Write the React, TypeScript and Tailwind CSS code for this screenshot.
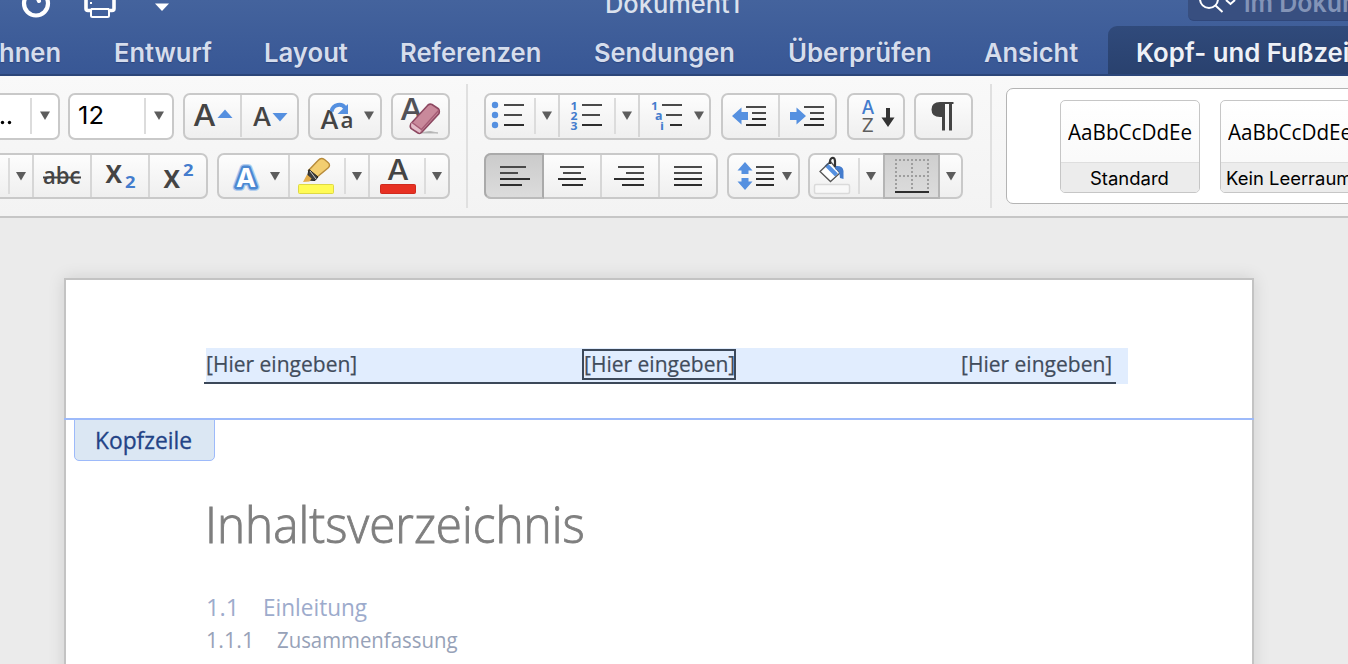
import { useLayoutEffect, useRef, useState, type ReactNode } from "react";
import clsx from "clsx";

/** Text stretched or condensed horizontally to a given advance width. */
function Fit({ width, className, children }: { width: number; className?: string; children: ReactNode }) {
  const ref = useRef<HTMLSpanElement>(null);
  const [scale, setScale] = useState(1);
  useLayoutEffect(() => {
    if (ref.current) setScale(width / ref.current.offsetWidth);
  }, [width]);
  return (
    <span className={clsx("block shrink-0", className)} style={{ width }}>
      <span ref={ref} className="inline-block origin-left whitespace-nowrap" style={{ transform: `scaleX(${scale})` }}>
        {children}
      </span>
    </span>
  );
}

function Group({ className, children }: { className?: string; children: ReactNode }) {
  return (
    <div
      className={clsx(
        "flex shrink-0 rounded-[7px] border-2 border-[#c9c9c9] bg-linear-to-b from-[#fdfdfd] to-[#efefef]",
        className,
      )}
    >
      {children}
    </div>
  );
}

/** One button; the view box uses toolbar coordinates. */
function Cell({ box, className, children }: { box: string; className?: string; children: ReactNode }) {
  return (
    <div className={clsx("shrink-0", className)}>
      <svg viewBox={box} className="block h-[43px] w-full overflow-visible">
        {children}
      </svg>
    </div>
  );
}

const Arrow = ({ x, y }: { x: number; y: number }) => (
  <path d={`M${x - 5} ${y - 4}h10l-5 8.500z`} fill="#5c5c5c" />
);
const Short = ({ x, y }: { x: number; y: number }) => <path d={`M${x} ${y}v36`} stroke="#dcdcdc" strokeWidth="2" />;
const Full = ({ x, y }: { x: number; y: number }) => <path d={`M${x} ${y}v42`} stroke="#d6d6d6" strokeWidth="2" />;

function Letter(p: { x: number; y: number; size: number; w: number; fill?: string; weight?: number; font?: string; children: string }) {
  return (
    <text
      x={p.x}
      y={p.y}
      fontSize={p.size}
      fontWeight={p.weight ?? 550}
      fontFamily={p.font ?? "Inter, sans-serif"}
      fill={p.fill ?? "#444"}
      textLength={p.w}
      lengthAdjust="spacingAndGlyphs"
    >
      {p.children}
    </text>
  );
}

const Lines = ({ rows }: { rows: number[][] }) => (
  <>
    {rows.map(([x1, x2, y], i) => (
      <path key={i} d={`M${x1} ${y}H${x2}`} stroke={i < rows.length / 2 ? "#4a4a4a" : "#2d2d2d"} strokeWidth="2" />
    ))}
  </>
);

const BLUE = "#5590e0";

function TitleBar() {
  return (
    <header className="h-[76px] overflow-hidden border-b-2 border-[#2c4679] bg-linear-to-b from-[#44639d] to-[#385795] font-['Inter',sans-serif] text-[26px] leading-8">
      <div className="flex h-[26px] items-start">
        <svg className="h-[26px] w-[180px] shrink-0" viewBox="0 0 180 26" fill="none" stroke="#fff">
          <circle cx="36" cy="3.5" r="12" strokeWidth="4.2" />
          <path d="M38 -1L39 1" strokeWidth="4" strokeLinecap="round" />
          <path d="M86 -2v10.500q0 2 2 2h3.500M114 -2v10.500q0 2-2 2h-3.500" strokeWidth="3.600" />
          <rect x="91" y="9" width="18" height="8" rx="1.500" strokeWidth="2" />
          <path d="M91 9H109" strokeWidth="2" />
          <rect x="90" y="2" width="2" height="2" fill="#fff" stroke="none" />
          <path d="M155 3.500h14l-7 7.500z" fill="#fff" stroke="none" />
        </svg>
        <Fit width={135} className="-mt-[12px] ml-[425px] font-medium text-[#dbe1ed]">
          Dokument1
        </Fit>
        <div className="ml-[448px] flex h-[21px] w-[160px] shrink-0 items-start overflow-hidden rounded-bl-[6px] border-b border-[#30477a] bg-[#384f80]">
          <svg className="h-[20px] w-[54px] shrink-0" viewBox="1188 0 54 20" fill="none" stroke="#fff" strokeWidth="2">
            <circle cx="1209" cy="-1" r="9" />
            <path d="M1215.500 5.500L1222.500 12M1226 0l4.500 4 4.500-4" />
          </svg>
          <Fit width={121} className="-mt-[13px] ml-[2px] font-semibold text-[#8394b7]">
            im Dokum
          </Fit>
        </div>
      </div>
      <nav className="flex h-12 w-[1360px] font-semibold text-[#d6ddec] [text-shadow:0_1px_1px_rgba(20,35,80,0.35)]">
        <Fit width={62} className="-ml-[1px] pt-[11px]">hnen</Fit>
        <Fit width={98} className="ml-[53px] pt-[11px]">Entwurf</Fit>
        <Fit width={84} className="ml-[52px] pt-[11px]">Layout</Fit>
        <Fit width={141} className="ml-[52px] pt-[11px]">Referenzen</Fit>
        <Fit width={141} className="ml-[53px] pt-[11px]">Sendungen</Fit>
        <Fit width={144} className="ml-[53px] pt-[11px]">Überprüfen</Fit>
        <Fit width={94} className="ml-[52px] pt-[11px]">Ansicht</Fit>
        <div className="ml-[30px] flex w-[260px] shrink-0 rounded-tl-[9px] bg-linear-to-b from-[#304a7b] to-[#29416e] pl-[28px] text-[#eef1f7]">
          <Fit width={214} className="pt-[11px]">Kopf- und Fußzei</Fit>
        </div>
      </nav>
    </header>
  );
}

function FontGroup() {
  return (
    <div className="flex w-[450px] shrink-0 flex-col gap-[13px] pt-[17px]">
      <div className="flex h-[47px]">
        <Group className="-ml-[10px] w-[70px] bg-white bg-none">
          <Cell box="-8 95 66 43" className="w-[66px]">
            <circle cx="2.500" cy="122.500" r="1.700" fill="#000" />
            <circle cx="9.500" cy="122.500" r="1.700" fill="#000" />
            <Short x={31} y={98} />
            <Arrow x={45} y={115.500} />
          </Cell>
        </Group>
        <Group className="ml-[8px] w-[106px] bg-white bg-none">
          <Cell box="70 95 102 43" className="w-[102px]">
            <Letter x={78} y={124} size={24} w={26} fill="#000" weight={400}>12</Letter>
            <Short x={145} y={98} />
            <Arrow x={159} y={115.500} />
          </Cell>
        </Group>
        <Group className="ml-[9px] w-[116px]">
          <Cell box="185 95 56 43" className="w-[56px]">
            <Letter x={193} y={126} size={30} w={23}>A</Letter>
            <path d="M217.500 118l7.500-8.500 7.500 8.500z" fill={BLUE} />
          </Cell>
          <Cell box="241 95 56 43" className="w-[56px]">
            <Full x={241} y={95} />
            <Letter x={252.500} y={125.500} size={25} w={19}>A</Letter>
            <path d="M272.500 113h15l-7.500 8.500z" fill={BLUE} />
          </Cell>
        </Group>
        <Group className="ml-[9px] w-[74px]">
          <Cell box="310 95 70 43" className="w-[70px]">
            <Letter x={320} y={128.500} size={25} w={19}>A</Letter>
            <Letter x={340.500} y={128} size={22} w={13} weight={600} font="Open Sans, sans-serif">a</Letter>
            <path d="M331.500 111.500C333 104 342 103 345 108" fill="none" stroke={BLUE} strokeWidth="4" />
            <path d="M348 104v10H337.500z" fill={BLUE} />
            <Arrow x={369} y={115.500} />
          </Cell>
        </Group>
        <Group className="ml-[9px] w-[59px]">
          <Cell box="393 95 55 43" className="w-[55px]">
            <Letter x={400} y={120} size={30} w={23} fill="#515157">A</Letter>
            <path d="M418 133H438l-8-1.500z" fill="#aaa" stroke="#bbb" />
            <path d="M411 123.500L428 105q2-1.500 4-.5l6 4q2 1.500 1 5L422 132q-2 2-4 1l-7-4.500q-1.500-2-0-5z" fill="#c9899b" stroke="#8d4861" strokeWidth="1.600" />
            <path d="M411.500 122.500L421 129.500l-1 3.500-8-5q-1.500-2-.5-5.500z" fill="#e3bcc8" />
            <path d="M412 122.500l9.500 7L439 110" fill="none" stroke="#a65d76" strokeWidth="1.400" />
          </Cell>
        </Group>
      </div>
      <div className="flex h-[46px]">
        <Group className="-ml-[10px] w-[218px]">
          <Cell box="-8 155 41 43" className="w-[41px]">
            <Short x={9} y={158} />
            <Arrow x={21} y={176} />
          </Cell>
          <Cell box="33 155 58 43" className="w-[58px]">
            <Full x={33} y={155} />
            <Letter x={43} y={184} size={23} w={37.500} weight={600} font="Open Sans, sans-serif">abc</Letter>
            <path d="M43 177.500H81" stroke="#444" strokeWidth="2" />
          </Cell>
          <Cell box="91 155 58 43" className="w-[58px]">
            <Full x={91} y={155} />
            <Letter x={105.500} y={182.500} size={25} w={16.500} weight={700} font="Open Sans, sans-serif">X</Letter>
            <Letter x={125} y={188} size={16} w={10.500} weight={700} font="Open Sans, sans-serif" fill="#447ccd">2</Letter>
          </Cell>
          <Cell box="149 155 57 43" className="w-[57px]">
            <Full x={149} y={155} />
            <Letter x={163.500} y={188} size={25} w={16.500} weight={700} font="Open Sans, sans-serif">X</Letter>
            <Letter x={183} y={176} size={16} w={10.500} weight={700} font="Open Sans, sans-serif" fill="#447ccd">2</Letter>
          </Cell>
        </Group>
        <Group className="ml-[9px] w-[233px]">
          <Cell box="219 155 70 43" className="w-[70px]">
            <g stroke="#a9c9ef" strokeWidth="7.500" strokeLinejoin="round">
              <Letter x={236} y={186.500} size={26} w={20} fill="#fff" weight={600}>A</Letter>
            </g>
            <g stroke="#4b88d2" strokeWidth="5" strokeLinejoin="round">
              <Letter x={236} y={186.500} size={26} w={20} fill="#fff" weight={600}>A</Letter>
            </g>
            <Letter x={236} y={186.500} size={26} w={20} fill="#fff" weight={700}>A</Letter>
            <Arrow x={275} y={176} />
          </Cell>
          <Cell box="289 155 80 43" className="w-[80px]">
            <Full x={289} y={155} />
            <path d="M318 160.500q3-3.500 6.500-1l3.500 3q3 2.500 0 5.500L317 177l-8.500-6.500z" fill="#f3ce70" stroke="#b78b3a" strokeWidth="1.400" />
            <path d="M309 169.500l9 7.500-3 3.500-7-.5-.5-3.500z" fill="#3d3d3d" stroke="#222" />
            <path d="M307 174.500l4.500 4-2 3-6.500.5z" fill="#e4ad4a" />
            <path d="M310 171l6 8" stroke="#ccc" />
            <rect x="298.500" y="184.500" width="35" height="9" rx="1" fill="#fffb55" stroke="#ded845" />
            <Short x={345} y={158} />
            <Arrow x={357} y={176} />
          </Cell>
          <Cell box="369 155 79 43" className="w-[79px]">
            <Full x={369} y={155} />
            <Letter x={387} y={180} size={28} w={22}>A</Letter>
            <rect x="380.500" y="184.500" width="35" height="9" rx="1" fill="#e73022" stroke="#cf2a1e" />
            <Short x={425} y={158} />
            <Arrow x={437} y={176} />
          </Cell>
        </Group>
      </div>
    </div>
  );
}

function ParagraphGroup() {
  return (
    <div className="flex w-[489px] shrink-0 flex-col gap-[13px] pt-[17px]">
      <div className="flex h-[47px]">
        <Group className="w-[227px]">
          <Cell box="486 95 73 43" className="w-[73px]">
            {[105, 115, 125].map((y) => (
              <circle key={y} cx="495" cy={y} r="3.200" fill={BLUE} />
            ))}
            <Lines rows={[[504, 524, 105], [504, 522, 115], [504, 524, 125]]} />
            <Short x={535} y={98} />
            <Arrow x={547} y={115.500} />
          </Cell>
          <Cell box="559 95 80 43" className="w-[80px]">
            <Full x={559} y={95} />
            <Letter x={570.500} y={110} size={11} w={7} weight={700} font="Open Sans, sans-serif" fill="#447ccd">1</Letter>
            <Letter x={570.500} y={120} size={11} w={7} weight={700} font="Open Sans, sans-serif" fill="#447ccd">2</Letter>
            <Letter x={570.500} y={130} size={11} w={7} weight={700} font="Open Sans, sans-serif" fill="#447ccd">3</Letter>
            <Lines rows={[[582, 602, 105], [582, 600, 115], [582, 602, 125]]} />
            <Short x={615} y={98} />
            <Arrow x={627} y={115.500} />
          </Cell>
          <Cell box="639 95 70 43" className="w-[70px]">
            <Full x={639} y={95} />
            <Letter x={651} y={110} size={11} w={7} weight={700} font="Open Sans, sans-serif" fill="#447ccd">1</Letter>
            <Letter x={655} y={120} size={13} w={7.500} weight={700} font="Open Sans, sans-serif" fill="#447ccd">a</Letter>
            <Letter x={660} y={130} size={11} w={4} weight={700} font="Open Sans, sans-serif" fill="#447ccd">i</Letter>
            <Lines rows={[[662, 682, 105], [666, 682, 115], [670, 682, 125]]} />
            <Arrow x={699} y={115.500} />
          </Cell>
        </Group>
        <Group className="ml-[10px] w-[116px]">
          <Cell box="723 95 56 43" className="w-[56px]">
            <path d="M732 116l9.500-8.500v4.500h6.500v8h-6.500v4.500z" fill={BLUE} />
            <Lines rows={[[746, 766, 107], [752, 766, 113], [752, 766, 119], [746, 766, 125]]} />
          </Cell>
          <Cell box="779 95 56 43" className="w-[56px]">
            <Full x={779} y={95} />
            <path d="M806 116l-9.500-8.500v4.500h-6.500v8h6.500v4.500z" fill={BLUE} />
            <Lines rows={[[804, 824, 107], [810, 824, 113], [810, 824, 119], [804, 824, 125]]} />
          </Cell>
        </Group>
        <Group className="ml-[10px] w-[58px]">
          <Cell box="849 95 54 43" className="w-[54px]">
            <Letter x={861.500} y={113.500} size={19} w={13} fill="#447ccd">A</Letter>
            <Letter x={861.500} y={132} size={19} w={12.500} fill="#5e5e5e" weight={400}>Z</Letter>
            <path d="M886 108h4v9.500h4.500l-6.500 9.500-6.500-9.500h4.500z" fill="#333" />
          </Cell>
        </Group>
        <Group className="ml-[9px] w-[59px]">
          <Cell box="916 95 55 43" className="w-[55px]">
            <path d="M953.500 102H940q-8.500 0-8.500 7.500T940 117h2v13.500h3V104h4v26.500h3V104h1.500z" fill="#444" />
          </Cell>
        </Group>
      </div>
      <div className="flex h-[46px]">
        <Group className="w-[234px]">
          <div className="-m-[2px] mr-0 flex w-[60px] shrink-0 rounded-l-[7px] border-2 border-[#aaa] border-b-[#bbb] bg-linear-to-b from-[#cbcbcb] to-[#dcdcdc]">
            <Cell box="486 155 56 43" className="w-[56px]">
              <Lines rows={[[500, 526, 167], [500, 518, 173], [500, 530, 179], [500, 522, 185]]} />
            </Cell>
          </div>
          <Cell box="544 155 57 43" className="w-[57px]">
            <Lines rows={[[560, 584, 167], [563, 581, 173], [558, 586, 179], [562, 583, 185]]} />
          </Cell>
          <Cell box="601 155 58 43" className="w-[58px]">
            <Full x={601} y={155} />
            <Lines rows={[[618, 644, 167], [626, 644, 173], [614, 644, 179], [622, 644, 185]]} />
          </Cell>
          <Cell box="659 155 57 43" className="w-[57px]">
            <Full x={659} y={155} />
            <Lines rows={[[674, 702, 167], [674, 702, 173], [674, 702, 179], [674, 702, 185]]} />
          </Cell>
        </Group>
        <Group className="ml-[9px] w-[73px]">
          <Cell box="729 155 69 43" className="w-[69px]">
            <path d="M745 162l7.500 8.500h-4v3.500h-7v-3.500h-4zM745 190l7.500-8.500h-4V178h-7v3.500h-4z" fill={BLUE} />
            <Lines rows={[[756, 774, 167], [756, 774, 173], [756, 774, 179], [756, 774, 185]]} />
            <Arrow x={787} y={176} />
          </Cell>
        </Group>
        <Group className="ml-[8px] w-[155px]">
          <Cell box="810 155 73 43" className="w-[73px]">
            <path d="M832 162.500l12 11-13 8.500-10.500-10z" fill="#fff" />
            <path d="M826 164.500l10.500 10.500" stroke={BLUE} strokeWidth="4" />
            <path d="M830.500 161.500L820 171.500l10.500 10 9.500-8.500z" fill="none" stroke="#555" strokeWidth="1.300" />
            <path d="M835 167v-6q-.5-4-3-3t-2 6" fill="none" stroke="#333" strokeWidth="2.200" />
            <path d="M836 166q7-.5 7.500 5v8l-3.500-1q0-8-5-9z" fill="#447ccd" />
            <rect x="814.500" y="184.500" width="35" height="9" rx="1.500" fill="#f8f8f8" stroke="#dadada" strokeWidth="1.500" />
            <Short x={859} y={158} />
            <Arrow x={871} y={176} />
          </Cell>
          <div className="-my-[2px] w-[57px] shrink-0 border-x-2 border-y-2 border-x-[#b5b5b5] border-t-[#aaa] border-b-[#b5b5b5] bg-linear-to-b from-[#cfcfcf] to-[#dcdcdc]">
            <Cell box="885 155 53 43" className="w-full">
              <path d="M895 160H929M895 176H929M896 159V190M912 159V190M928 159V190" stroke="#9e9e9e" strokeWidth="2" strokeDasharray="2 2" fill="none" />
              <path d="M895 192H929" stroke="#2d2d2d" strokeWidth="2" />
            </Cell>
          </div>
          <Cell box="940 155 21 43" className="w-[21px]">
            <Arrow x={951} y={176} />
          </Cell>
        </Group>
      </div>
    </div>
  );
}

function StyleCard({ label, labelWidth, indent }: { label: string; labelWidth: number; indent: string }) {
  return (
    <div className="flex h-[93px] w-[140px] shrink-0 flex-col overflow-hidden rounded-[5px] border border-[#c6c6c6] bg-linear-to-b from-white to-[#f7f7f7]">
      <div className="h-[61px] shrink-0 pt-[15px] pl-[7px] font-['Open_Sans',sans-serif] text-[21px] leading-8 text-black">
        <Fit width={124}>AaBbCcDdEe</Fit>
      </div>
      <div className={clsx("h-[30px] shrink-0 border-t border-[#dedede] bg-[#ececec] font-['Inter',sans-serif] text-[18px] leading-8 text-black", indent)}>
        <Fit width={labelWidth}>{label}</Fit>
      </div>
    </div>
  );
}

function Ribbon() {
  return (
    <div className="flex h-[142px] overflow-hidden border-b-2 border-[#c6c6c6] bg-linear-to-b from-[#f9f9f9] to-[#f3f3f3]">
      <FontGroup />
      <div className="mt-[8px] ml-[16px] h-[124px] w-[2px] shrink-0 bg-[#e0e0e0]" />
      <div className="ml-[16px] flex shrink-0">
        <ParagraphGroup />
      </div>
      <div className="mt-[8px] ml-[17px] h-[124px] w-[2px] shrink-0 bg-[#e0e0e0]" />
      <div className="mt-[12px] ml-[14px] flex h-[116px] w-[400px] shrink-0 gap-5 rounded-l-[7px] border border-[#b4b4b4] bg-white pt-[11px] pl-[53px]">
        <StyleCard label="Standard" labelWidth={79} indent="pl-[29px]" />
        <StyleCard label="Kein Leerraum" labelWidth={126} indent="pl-[5px]" />
      </div>
    </div>
  );
}

function Page() {
  return (
    <main className="flex-1 overflow-hidden bg-[#ebebeb] pt-[60px] pl-[64px]">
      <article className="h-[500px] w-[1190px] border-2 border-[#c3c3c3] bg-white font-['Open_Sans',sans-serif] shadow-[0_0_16px_rgba(0,0,0,0.12)]">
        <div className="-mx-[2px] h-[140px] border-b-2 border-[#9dbafa] pt-[68px]">
          <div className="ml-[142px] h-[36px] w-[922px] bg-[#e1edfe]">
            <div className="-ml-[2px] flex h-[36px] w-[912px] border-b-2 border-[#3c4859] text-[22px] leading-[31px] text-[#414c5c] [-webkit-text-stroke:0.2px_#414c5c]">
              <Fit width={151} className="ml-[2px]">[Hier eingeben]</Fit>
              <div className="mt-px ml-[225px] h-[31px] w-[154px] shrink-0 border-2 border-[#3c4859]">
                <Fit width={151} className="-mt-[3px]">[Hier eingeben]</Fit>
              </div>
              <Fit width={151} className="ml-[225px]">[Hier eingeben]</Fit>
            </div>
          </div>
        </div>
        <div className="-mt-px ml-[8px] flex h-[42px] w-[141px] justify-center rounded-b-[5px] border border-[#9dbafa] bg-[#dbe7f3] pr-[3px] text-[23px] leading-[40px] text-[#234386] [-webkit-text-stroke:0.3px_#234386]">
          <Fit width={97}>Kopfzeile</Fit>
        </div>
        <h1 className="mt-[29px] ml-[139px] text-[50px] leading-[68px] font-light text-[#7f7f7f] [-webkit-text-stroke:0.9px_#7f7f7f]">
          <Fit width={380}>Inhaltsverzeichnis</Fit>
        </h1>
        <div className="mt-[33px] ml-[140px] flex text-[23px] leading-8 text-[#9dabcc]">
          <Fit width={33}>1.1</Fit>
          <Fit width={104} className="ml-[24px]">Einleitung</Fit>
        </div>
        <div className="mt-px ml-[140px] flex text-[21.500px] leading-8 text-[#97a2b8]">
          <Fit width={48}>1.1.1</Fit>
          <Fit width={180} className="ml-[23px]">Zusammenfassung</Fit>
        </div>
      </article>
    </main>
  );
}

export default function App() {
  return (
    <div className="flex h-[664px] w-[1348px] flex-col overflow-hidden">
      <TitleBar />
      <Ribbon />
      <Page />
    </div>
  );
}
